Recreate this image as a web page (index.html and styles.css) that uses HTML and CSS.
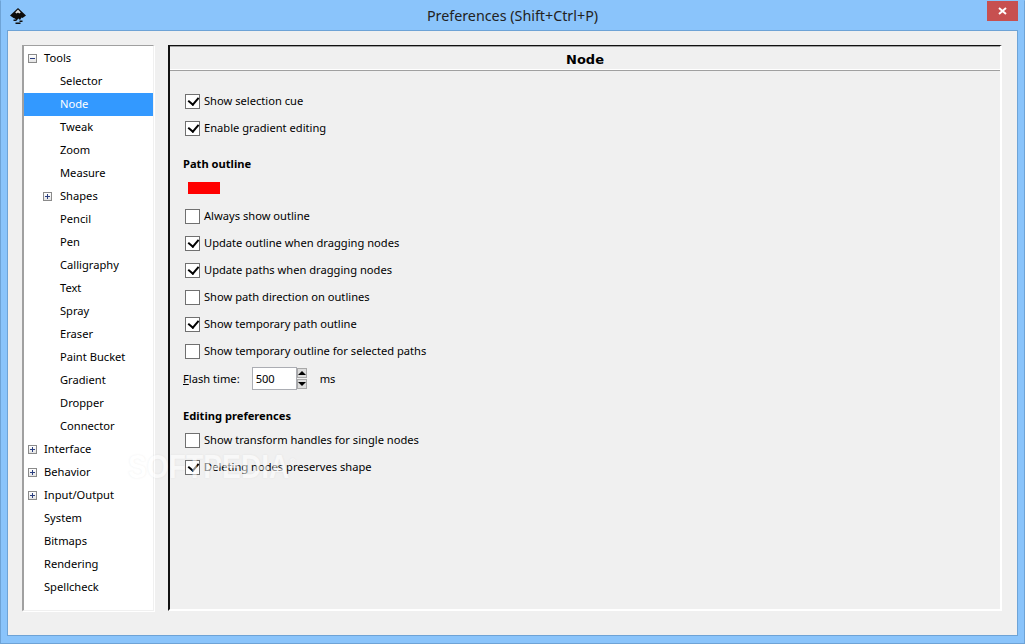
FILE: index.html
```html
<!DOCTYPE html>
<html lang="en">
<head>
<meta charset="utf-8">
<title>Preferences</title>
<link rel="stylesheet" href="styles.css">
</head>
<body>
<div class="window">
  <header class="titlebar">
    <svg class="logo" viewBox="0 0 16 16" width="16" height="16">
      <path d="M8 0 L16 7.5 L12.5 10 L11.5 9.5 L10 12 L8.5 10.5 L6.5 12.5 L5 10.5 L3.5 10 L0 7.5 Z" fill="#0c0c0c"/>
      <path d="M8 1.5 L10.8 4.6 L9.2 5.6 L8 4.6 L6.6 5.6 L5.2 4.6 Z" fill="#dcdcdc"/>
      <path d="M3.5 11.5h3V13h-3zM9.5 12.5h3V14h-3zM5.5 14.5h5V16h-5z" fill="#111"/>
    </svg>
    <div class="title">Preferences (Shift+Ctrl+P)</div>
    <div class="close"><svg viewBox="0 0 9 8" width="9" height="8"><path d="M1 1 L8 7 M8 1 L1 7" stroke="#fff" stroke-width="2"/></svg></div>
  </header>
  <main class="client">
    <nav class="tree">
      <div class="row"><span class="exp minus"></span>Tools</div>
      <div class="row sub">Selector</div>
      <div class="row sub sel">Node</div>
      <div class="row sub">Tweak</div>
      <div class="row sub">Zoom</div>
      <div class="row sub">Measure</div>
      <div class="row sub"><span class="exp plus"></span>Shapes</div>
      <div class="row sub">Pencil</div>
      <div class="row sub">Pen</div>
      <div class="row sub">Calligraphy</div>
      <div class="row sub">Text</div>
      <div class="row sub">Spray</div>
      <div class="row sub">Eraser</div>
      <div class="row sub">Paint Bucket</div>
      <div class="row sub">Gradient</div>
      <div class="row sub">Dropper</div>
      <div class="row sub">Connector</div>
      <div class="row"><span class="exp plus"></span>Interface</div>
      <div class="row"><span class="exp plus"></span>Behavior</div>
      <div class="row"><span class="exp plus"></span>Input/Output</div>
      <div class="row">System</div>
      <div class="row">Bitmaps</div>
      <div class="row">Rendering</div>
      <div class="row">Spellcheck</div>
    </nav>
    <section class="pane">
      <h1 class="pane-title">Node</h1>
      <div class="pane-body">
        <label class="check on">Show selection cue</label>
        <label class="check on">Enable gradient editing</label>
        <h2 class="heading first">Path outline</h2>
        <div class="swatch"></div>
        <label class="check">Always show outline</label>
        <label class="check on">Update outline when dragging nodes</label>
        <label class="check on">Update paths when dragging nodes</label>
        <label class="check">Show path direction on outlines</label>
        <label class="check on">Show temporary path outline</label>
        <label class="check">Show temporary outline for selected paths</label>
        <div class="flash">
          <span><u>F</u>lash time:</span>
          <div class="spin">
            <div class="spin-input">500</div>
            <div class="spin-btns">
              <div class="spin-btn up"></div>
              <div class="spin-btn down"></div>
            </div>
          </div>
          <span class="unit">ms</span>
        </div>
        <h2 class="heading second">Editing preferences</h2>
        <label class="check">Show transform handles for single nodes</label>
        <label class="check on">Deleting nodes preserves shape</label>
      </div>
      <div class="watermark">SOFTPEDIA<sup>®</sup></div>
    </section>
  </main>
</div>
</body>
</html>
```
FILE: styles.css
```css
* { box-sizing: border-box; }
html, body { margin: 0; padding: 0; }
body {
  width: 1025px;
  height: 644px;
  overflow: hidden;
  font-family: "Noto Sans", sans-serif;
  font-size: 11.15px;
  color: #000;
}
.window {
  width: 1025px;
  height: 644px;
  display: flex;
  flex-direction: column;
  background: #8ac4fb;
  border: 1px solid #6ea3d6;
  border-top-color: #8ac4fb;
}
.titlebar {
  height: 29px;
  flex: none;
  display: flex;
  align-items: center;
  position: relative;
  padding-left: 9px;
}
.logo { flex: none; margin-top: 1px; }
.title {
  position: absolute;
  left: 0;
  right: 0;
  top: 5px;
  text-align: center;
  font-size: 14.3px;
  line-height: 20px;
  color: #222;
}
.close {
  position: absolute;
  right: 6px;
  top: 0;
  width: 31px;
  height: 20px;
  background: #c75050;
  display: flex;
  align-items: center;
  justify-content: center;
}
.client {
  flex: 1;
  margin: 0 6px 7px;
  background: #f0f0f0;
  border: 1px solid #6ea3d6;
  padding: 14px 15px 24px 14px;
  display: flex;
  gap: 14px;
}
.tree {
  width: 132px;
  flex: none;
  background: #fff;
  border-left: 2px solid #a0a0a0;
  border-top: 1px solid #a0a0a0;
  border-right: 1px solid #f0f0f0;
  border-bottom: 1px solid #f0f0f0;
  box-shadow: 1px 1px 0 #fff;
  padding-top: 1px;
}
.row {
  height: 23px;
  line-height: 22px;
  padding-left: 20px;
  position: relative;
  white-space: nowrap;
}
.row.sub { padding-left: 36px; }
.row.sel { background: #3399ff; color: #fff; }
.exp {
  position: absolute;
  left: 4px;
  top: 7px;
  width: 9px;
  height: 9px;
  border: 1px solid #8a8a8a;
  background: linear-gradient(#fff, #e4e4e4);
}
.row.sub .exp { left: 19px; }
.exp::before {
  content: "";
  position: absolute;
  left: 1px;
  top: 3px;
  width: 5px;
  height: 1px;
  background: #2b3f80;
}
.exp.plus::after {
  content: "";
  position: absolute;
  left: 3px;
  top: 1px;
  width: 1px;
  height: 5px;
  background: #2b3f80;
}
.pane {
  flex: 1;
  position: relative;
  border-left: 2px solid #111;
  border-top: 1px solid #111;
  border-right: 2px solid #fff;
  border-bottom: 2px solid #fff;
  display: flex;
  flex-direction: column;
}
.pane-title {
  margin: 0;
  height: 25px;
  flex: none;
  border-top: 1px solid #a0a0a0;
  border-bottom: 1px solid #a0a0a0;
  box-shadow: inset 0 -1px 0 #fff;
  font-family: "DejaVu Sans", sans-serif;
  font-size: 13px;
  font-weight: bold;
  text-align: center;
  line-height: 25px;
}
.pane-body {
  padding: 16px 0 0 13px;
  display: flex;
  flex-direction: column;
  align-items: flex-start;
}
.check {
  height: 27px;
  line-height: 27px;
  padding-left: 21px;
  position: relative;
  white-space: nowrap;
}
.check::before {
  content: "";
  position: absolute;
  left: 2px;
  top: 7px;
  width: 13px;
  height: 13px;
  border: 1px solid #707070;
  background: #fff;
}
.check.on::after {
  content: "";
  position: absolute;
  left: 6.5px;
  top: 8px;
  width: 5px;
  height: 8px;
  border: solid #000;
  border-width: 0 2.5px 2.5px 0;
  transform: rotate(40deg);
}
.heading {
  margin: 0;
  font-size: 11.15px;
  font-weight: bold;
  line-height: 18px;
}
.heading.first { margin-top: 14px; }
.heading.second { margin-top: 15px; margin-bottom: 1px; }
.swatch {
  width: 32px;
  height: 12px;
  background: #ff0000;
  margin: 9px 0 8px 5px;
}
.flash {
  display: flex;
  align-items: center;
  height: 28px;
}
.spin {
  display: flex;
  margin-left: 12px;
  height: 23px;
}
.spin-input {
  width: 45px;
  height: 23px;
  border: 1px solid #abadb3;
  background: #fff;
  padding-left: 3px;
  line-height: 21px;
}
.spin-btns {
  width: 10px;
  display: flex;
  flex-direction: column;
  gap: 1px;
  padding: 1px 0;
}
.spin-btn {
  flex: 1;
  border: 1px solid #a8a8a8;
  background: #dcdcdc;
  position: relative;
}
.spin-btn::after {
  content: "";
  position: absolute;
  left: 0;
  border-left: 4px solid transparent;
  border-right: 4px solid transparent;
}
.spin-btn.up::after { top: 2px; border-bottom: 4px solid #000; }
.spin-btn.down::after { top: 2px; border-top: 4px solid #000; }
.unit { margin-left: 13px; }
.watermark {
  position: absolute;
  left: -42px;
  top: 397px;
  font-family: "Liberation Sans", sans-serif;
  font-size: 34px;
  line-height: 40px;
  font-weight: bold;
  color: #fff;
  opacity: 0.55;
  white-space: nowrap;
  pointer-events: none;
  transform: scaleX(0.83);
  transform-origin: left top;
  text-shadow: 0 0 2px rgba(0, 0, 0, 0.12);
}
.watermark sup { font-size: 10px; }
```
